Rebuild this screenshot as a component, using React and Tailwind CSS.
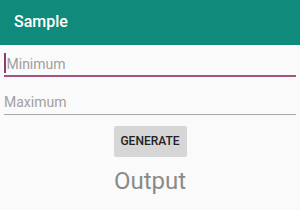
import React from "react";

export default function App() {
  return (
    <div className="w-[300px] h-[210px] bg-[#fafafa] overflow-hidden" style={{ fontFamily: "Roboto, sans-serif" }}>
      <div className="h-[45px] bg-[#0f8a7b] flex items-center pl-[14px]">
        <span className="text-white text-[16px] font-medium leading-none -mt-[1px]">Sample</span>
      </div>
      <div className="px-[4px]">
        <div className="relative h-[30px] flex items-end">
          <div className="absolute left-0 top-[8px] w-[2px] h-[20px] bg-[#8e3a6a]"></div>
          <span className="text-[14px] text-[#9e9e9e] leading-none pl-[2.5px] mb-[4px]">Minimum</span>
        </div>
        <div className="h-[2px] bg-[#a5527f]"></div>
        <div className="h-[36.5px] flex items-end">
          <span className="text-[14px] text-[#a0a0a0] leading-none mb-[5px]">Maximum</span>
        </div>
        <div className="h-[1.5px] bg-[#a8a8a8]"></div>
      </div>
      <div className="flex justify-center mt-[10.5px]">
        <div className="w-[73px] h-[31px] bg-[#d6d6d6] rounded-[2px] flex items-center justify-center text-[12px] font-medium text-[#222] leading-none">
          GENERATE
        </div>
      </div>
      <div className="flex justify-center mt-[12px]">
        <span className="text-[24px] text-[#8a8a8a] leading-none">Output</span>
      </div>
    </div>
  );
}
